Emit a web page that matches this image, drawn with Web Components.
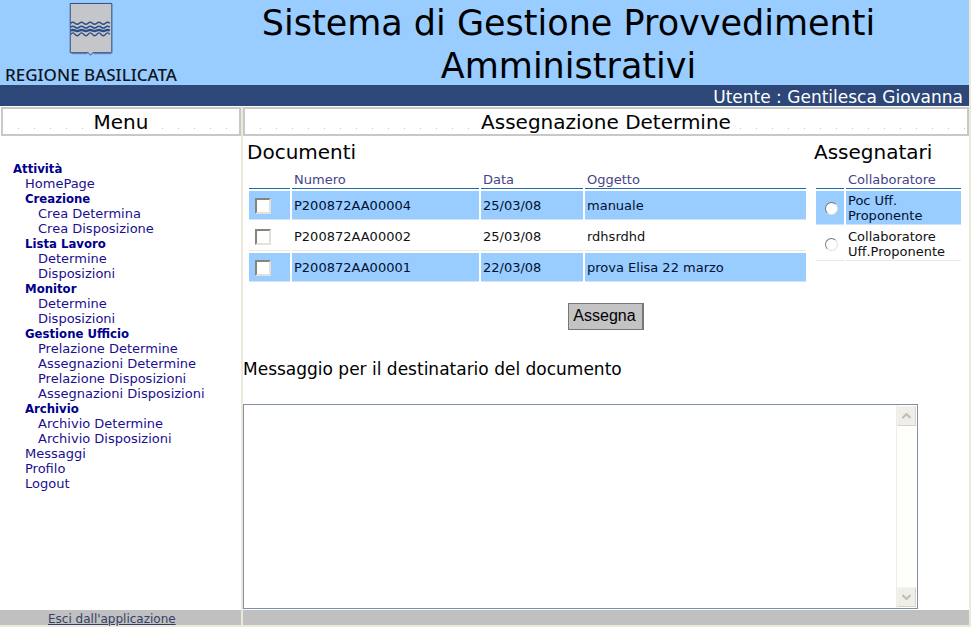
<!DOCTYPE html>
<html lang="it">
<head>
<meta charset="utf-8">
<title>Sistema di Gestione Provvedimenti Amministrativi</title>
<style>
  body { margin: 0; background: #fff; color: #000; font-family: Verdana, "DejaVu Sans", sans-serif; font-size: 13px; }
</style>
</head>
<body>
<gestione-app></gestione-app>
<script>
const define = (name, render) => customElements.define(name, class extends HTMLElement {
  constructor() {
    super();
    this.attachShadow({ mode: 'open' });
  }
  connectedCallback() {
    this.shadowRoot.innerHTML = render(this);
  }
});

define('regione-logo', () => `
<style>
  :host { display: flex; flex-direction: column; align-items: center; width: 182px; padding-top: 2px; box-sizing: border-box; }
  svg { display: block; width: 46px; height: 58px; }
  span { font: 500 17px/20px "Noto Sans", sans-serif; color: #10151c; margin-top: 7px; white-space: nowrap; }
</style>
<svg viewBox="0 0 46 58" aria-hidden="true">
  <path d="M1.500 1.500H44.500V52.500H25L22.500 55L20 52.500H1.500Z" fill="#c5c6c9" stroke="#2a4a80"/>
  <path d="M44.500 2V53M3 53.500H19M26 53.500H44" stroke="#5577a6" fill="none"/>
  <g fill="none" stroke="#2b4d86" stroke-width="1.500">
    <path d="M2 22q2.250-2 4.500 0t4.500 0 4.500 0 4.500 0 4.500 0 4.500 0 4.500 0 4.500 0 4.500 0"/>
    <path d="M2 26q2.250-2 4.500 0t4.500 0 4.500 0 4.500 0 4.500 0 4.500 0 4.500 0 4.500 0 4.500 0"/>
    <path d="M2 29.500q2.250-1 4.500 0t4.500 0 4.500 0 4.500 0 4.500 0 4.500 0 4.500 0 4.500 0 4.500 0" stroke-width="2.500"/>
    <path d="M2 33.500q2.250-3 4.500 0t4.500 0 4.500 0 4.500 0 4.500 0 4.500 0 4.500 0 4.500 0 4.500 0"/>
  </g>
</svg>
<span>REGIONE BASILICATA</span>`);

define('app-header', () => `
<style>
  :host { display: block; }
  header { display: flex; background: #99ccff; height: 85px; }
  h1 { flex: 1; margin: 0; padding: 2px 14px 0 0; text-align: center; font-size: 35px; line-height: 43px; font-weight: 400; }
  h1 span { display: block; }
  .user { background: #2c4778; color: #fff; text-align: right; font-size: 17px; line-height: 24px; height: 21px; padding-right: 6px; }
</style>
<header><regione-logo></regione-logo><h1><span>Sistema di Gestione Provvedimenti</span> <span>Amministrativi</span></h1></header>
<div class="user"><slot></slot></div>`);

define('panel-title', () => `
<style>
  :host { display: block; }
  h2 { margin: 0; border: 2px solid #c8c8c8; text-align: center; font-size: 20px; line-height: 26px; height: 25px; font-weight: 400;
       background: repeating-linear-gradient(90deg, transparent 0 15px, #c4c4c4 15px 16px) 0 19px / 100% 1px no-repeat; }
  span { background: #fff; padding: 0 2px; }
</style>
<h2><span><slot></slot></span></h2>`);

const menu = [
  ['HomePage'],
  ['Creazione', ['Crea Determina', 'Crea Disposizione']],
  ['Lista Lavoro', ['Determine', 'Disposizioni']],
  ['Monitor', ['Determine', 'Disposizioni']],
  ['Gestione Ufficio', ['Prelazione Determine', 'Assegnazioni Determine', 'Prelazione Disposizioni', 'Assegnazioni Disposizioni']],
  ['Archivio', ['Archivio Determine', 'Archivio Disposizioni']],
  ['Messaggi'], ['Profilo'], ['Logout']
];

define('side-menu', () => `
<style>
  :host { display: block; padding: 25px 0 0 13px; font-size: 13px; line-height: 15px; color: #00008b; }
  ul { list-style: none; margin: 0; padding: 0 0 0 12px; }
  ul ul { padding-left: 13px; }
  a { color: #1a0f8f; text-decoration: none; }
  strong { display: block; font-family: Tahoma, "DejaVu Sans Condensed", "DejaVu Sans", sans-serif; font-size: 13px; }
</style>
<nav><strong>Attività</strong><ul>${menu.map(([name, items]) => items
  ? `<li><strong>${name}</strong><ul>${items.map(i => `<li><a href="#">${i}</a></li>`).join('')}</ul></li>`
  : `<li><a href="#">${name}</a></li>`).join('')}</ul></nav>`);

const tableStyle = `
  :host { display: block; }
  h3 { margin: 0 0 6px; font-size: 20px; line-height: 24px; font-weight: 400; }
  table { border-spacing: 2px; width: 100%; table-layout: fixed; line-height: 15px; }
  th { text-align: left; font-weight: 400; color: #444488; line-height: 16px; padding: 0 0 0 2px; border-bottom: 1px solid #1c6cb8; }
  td { padding: 1px 0 0 2px; border-bottom: 1px solid #f2e6dc; color: #111; }
  tr.on td { background: #99ccff; border-bottom-color: #cfe4f5; color: #001030; }
  label { display: block; }
  input { appearance: none; display: block; margin: 0; background: #fff; box-sizing: border-box; }
`;

const documents = [
  ['P200872AA00004', '25/03/08', 'manuale'],
  ['P200872AA00002', '25/03/08', 'rdhsrdhd'],
  ['P200872AA00001', '22/03/08', 'prova Elisa 22 marzo']
];

define('document-table', () => `
<style>${tableStyle}
  td { height: 27px; }
  input { width: 16px; height: 16px; margin-left: 4px; border: 2px solid; border-color: #85857d #e4e1d8 #e4e1d8 #85857d; }
</style>
<h3>Documenti</h3>
<table>
  <colgroup><col style="width:41px"><col style="width:187px"><col style="width:102px"><col></colgroup>
  <thead><tr><th></th><th>Numero</th><th>Data</th><th>Oggetto</th></tr></thead>
  <tbody>${documents.map(([n, d, o], i) => `
    <tr class="${i % 2 ? '' : 'on'}"><td><input type="checkbox" id="d${i}" aria-labelledby="n${i}"></td><td><label id="n${i}" for="d${i}">${n}</label></td><td>${d}</td><td>${o}</td></tr>`).join('')}
  </tbody>
</table>`);

define('assignee-table', () => `
<style>${tableStyle}
  td { height: 32px; }
  input { width: 13px; height: 13px; margin-left: 7px; border-radius: 50%; border: 1px solid; border-color: #777 #e2e0d8 #e2e0d8 #777; }
</style>
<h3>Assegnatari</h3>
<table>
  <colgroup><col style="width:28px"><col></colgroup>
  <thead><tr><th></th><th>Collaboratore</th></tr></thead>
  <tbody>
    <tr class="on"><td><input type="radio" name="assignee" id="a0"></td><td><label for="a0">Poc Uff.<br>Proponente</label></td></tr>
    <tr><td><input type="radio" name="assignee" id="a1"></td><td><label for="a1">Collaboratore Uff.Proponente</label></td></tr>
  </tbody>
</table>`);

define('message-box', () => `
<style>
  :host { display: block; }
  label { display: block; font-size: 17px; line-height: 20px; margin-bottom: 25px; }
  .field { display: flex; width: 93%; height: 205px; box-sizing: border-box; border: 1px solid #7f8fa9; }
  textarea { flex: 1; min-width: 0; border: 0; margin: 0; padding: 2px; resize: none; outline: 0; overflow: hidden; background: #fff; font: 16px/20px "Liberation Mono", monospace; }
  .bar { display: flex; flex-direction: column; justify-content: space-between; width: 20px; padding: 1px 0; border-left: 1px solid #eeede5; background: #fefefb; }
  button { display: flex; align-items: center; justify-content: center; width: 19px; height: 20px; padding: 0; background: #efeee9; border: 1px solid; border-color: #f5f4ee #d5d4cc #d5d4cc #f5f4ee; border-radius: 1px; }
  path { fill: none; stroke: #bdbcb5; stroke-width: 2; }
</style>
<label for="msg">Messaggio per il destinatario del documento</label>
<div class="field">
  <textarea id="msg"></textarea>
  <div class="bar">
    <button type="button" aria-label="Scorri su"><svg width="9" height="6" viewBox="0 0 9 6"><path d="M.500 5L4.500 1L8.500 5"/></svg></button>
    <button type="button" aria-label="Scorri giù"><svg width="9" height="6" viewBox="0 0 9 6"><path d="M.500 1L4.500 5L8.500 1"/></svg></button>
  </div>
</div>`);

define('assign-form', () => `
<style>
  :host { display: block; }
  .lists { display: grid; grid-template-columns: 1fr 149px; gap: 6px; padding: 4px 6px 0 4px; }
  .action { display: flex; justify-content: center; padding: 19px 0 29px; }
  .action button { font: 16px/18px "Liberation Sans", Arial, sans-serif; height: 27px; padding: 0 6px 2px 4px; color: #000; background: #c3c3c3; border: 1px solid #777; border-right-width: 2px; border-radius: 0; }
</style>
<form>
  <div class="lists"><document-table></document-table><assignee-table></assignee-table></div>
  <div class="action"><button type="button">Assegna</button></div>
  <message-box></message-box>
</form>`);

define('gestione-app', () => `
<style>
  :host { display: block; border-right: 2px solid #ece9d8; }
  .body { display: grid; grid-template-columns: 241px 1fr; column-gap: 2px; background: #ece9d8; border-bottom: 2px solid #ece9d8; }
  .body > * { background: #fff; padding-top: 1px; }
  aside > panel-title { padding-left: 1px; }
  main { min-width: 0; padding-bottom: 1px; }
  .body > .foot { background: #c0c0c0; height: 15px; padding: 0; line-height: 18px; font-size: 12px; }
  .foot a { color: #333f6b; margin-left: 48px; }
</style>
<app-header>Utente : Gentilesca Giovanna</app-header>
<div class="body">
  <aside><panel-title>Menu</panel-title><side-menu></side-menu></aside>
  <main><panel-title>Assegnazione Determine</panel-title><assign-form></assign-form></main>
  <div class="foot"><a href="#">Esci dall'applicazione</a></div>
  <div class="foot"></div>
</div>`);
</script>
</body>
</html>
